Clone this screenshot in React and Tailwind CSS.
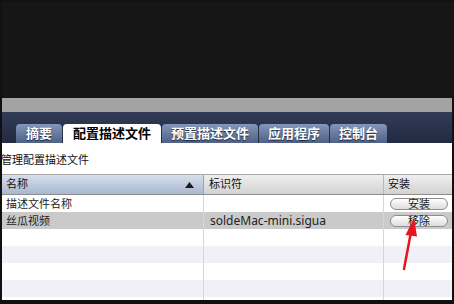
const cjk = { fontFamily: '"Noto Sans", "Noto Sans CJK SC", sans-serif' };

const tabs = [
  { label: '摘要', pad: 'px-[10px]' },
  { label: '配置描述文件', active: true },
  { label: '预置描述文件', pad: 'px-[9px]' },
  { label: '应用程序', pad: 'px-[9px]' },
  { label: '控制台', pad: 'px-[9px]' },
];

const rows = [
  { name: '描述文件名称', id: '', action: '安装', bg: 'bg-white' },
  { name: '丝瓜视频', id: 'soldeMac-mini.sigua', action: '移除', bg: 'bg-[#cacaca]' },
  { name: '', id: '', bg: 'bg-white' },
  { name: '', id: '', bg: 'bg-[#eff1f6]' },
  { name: '', id: '', bg: 'bg-white' },
  { name: '', id: '', bg: 'bg-[#eff1f6]' },
  { name: '', id: '', bg: 'bg-white' },
];

function PillButton({ children }) {
  return (
    <button className="w-[58px] h-[12px] rounded-full border border-[#8e8e8e] bg-gradient-to-b from-white to-[#dcdcdc] text-[11px] leading-[10px] text-[#222] flex items-center justify-center">
      {children}
    </button>
  );
}

export default function App() {
  return (
    <div className="relative w-[454px] h-[304px] overflow-hidden bg-[#101010] pl-[2px] pr-[2px] pb-[4px] flex flex-col" style={cjk}>
      {/* dark top area */}
      <div className="h-[98px] shrink-0 -mx-[2px] bg-[#161616] border-t-2 border-l-2 border-[#111]" />

      {/* gray band */}
      <div className="h-[14px] shrink-0 bg-[#a3a3a3]" />

      {/* tab bar */}
      <div className="h-[31px] shrink-0 bg-gradient-to-b from-[#333c56] to-[#222a42] flex items-end pl-[14px] gap-[1px]">
        {tabs.map((t) =>
          t.active ? (
            <div key={t.label} className="h-[19px] px-[10px] rounded-t-[4px] bg-white text-black text-[13px] font-bold leading-[19px]">
              {t.label}
            </div>
          ) : (
            <div
              key={t.label}
              className={`h-[19px] ${t.pad} rounded-t-[4px] bg-gradient-to-b from-[#8397ba] to-[#4f6184] text-white text-[13px] font-bold leading-[19px] [text-shadow:0_1px_1px_#1c2438]`}
            >
              {t.label}
            </div>
          )
        )}
      </div>

      {/* content */}
      <div className="flex-1 min-h-0 bg-white flex flex-col overflow-hidden">
        <div className="h-[31px] shrink-0 pt-[9px] -ml-[1px] text-[11px] leading-[15px] text-[#111]">管理配置描述文件</div>

        {/* header */}
        <div className="h-[21px] shrink-0 flex border-t border-b border-t-[#a8a8a8] border-b-[#8c8c8c] text-[11px] text-[#111]">
          <div className="w-[202px] shrink-0 bg-gradient-to-b from-[#d6dfec] to-[#a8b8d1] flex items-center justify-between pl-[4px] pr-[9px] border-r border-[#9aa6b8]">
            <span>名称</span>
            <svg width="9" height="6" viewBox="0 0 9 6"><path d="M0 6 L4.5 0 L9 6 Z" fill="#1a1a1a" /></svg>
          </div>
          <div className="w-[180px] shrink-0 bg-gradient-to-b from-[#efefef] to-[#d2d2d2] flex items-center pl-[5px] border-r border-[#b8b8b8]">标识符</div>
          <div className="flex-1 bg-gradient-to-b from-[#efefef] to-[#d2d2d2] flex items-center pl-[4px]">安装</div>
        </div>

        {rows.map((r, i) => (
          <div key={i} className={`h-[17px] shrink-0 flex ${r.bg} text-[11px] text-[#222]`}>
            <div className="w-[202px] shrink-0 pl-[4px] leading-[17px] border-r border-[#d6d6d6]">{r.name}</div>
            <div className="w-[180px] shrink-0 pl-[6px] leading-[17px] text-[12px] border-r border-[#d6d6d6]">{r.id}</div>
            <div className="flex-1 flex items-center pl-[6px]">{r.action && <PillButton>{r.action}</PillButton>}</div>
          </div>
        ))}
      </div>

      {/* red arrow annotation */}
      <svg className="absolute left-0 top-0 pointer-events-none" width="454" height="304">
        <line x1="404" y1="269" x2="411" y2="232" stroke="#e8141e" strokeWidth="2.5" strokeLinecap="round" />
        <path d="M414 218 L405.5 235 L417 236.5 Z" fill="#e8141e" />
      </svg>
    </div>
  );
}
